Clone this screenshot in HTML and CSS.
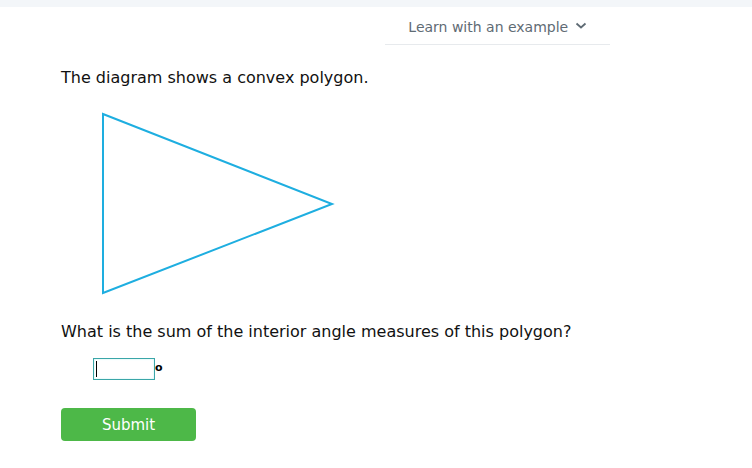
FILE: index.html
```html
<!DOCTYPE html>
<html>
<head>
<meta charset="utf-8">
<link rel="stylesheet" href="styles.css">
</head>
<body>
<div class="topbar"></div>
<div class="header">
  <div class="learn">Learn with an example <svg class="chev" width="12" height="8" viewBox="0 0 12 8"><path d="M1.5 1.5 L6 5.5 L10.5 1.5" fill="none" stroke="#5f6b74" stroke-width="1.8"/></svg></div>
</div>
<div class="content">
  <p class="text intro">The diagram shows a convex polygon.</p>
  <svg class="figure" width="236" height="186" viewBox="0 0 236 186">
    <polygon points="3,3 232,93 3,182" fill="none" stroke="#1eaee0" stroke-width="2" stroke-linejoin="miter"/>
  </svg>
  <p class="text question">What is the sum of the interior angle measures of this polygon?</p>
  <div class="answer">
    <div class="input"><span class="caret"></span></div>
    <span class="deg">o</span>
  </div>
  <button class="submit">Submit</button>
</div>
</body>
</html>
```
FILE: styles.css
```css
body {
  margin: 0;
  font-family: "DejaVu Sans", Verdana, sans-serif;
  background: #fff;
  color: #000;
}
.topbar {
  height: 7px;
  background: #f3f6f9;
}
.header {
  display: flex;
  padding-left: 385px;
  padding-top: 9px;
}
.learn {
  width: 225px;
  text-align: center;
  font-size: 14px;
  color: #5f6b74;
  height: 28px;
  line-height: 22px;
  border-bottom: 1px solid #e7eaed;
}
.chev {
  vertical-align: 2px;
  margin-left: 2px;
}
.content {
  padding-left: 61px;
}
.text {
  margin: 0;
  font-size: 16px;
  line-height: 20px;
  color: #111;
}
.intro {
  margin-top: 23px;
}
.figure {
  display: block;
  margin-left: 39px;
  margin-top: 23px;
}
.question {
  margin-top: 25px;
}
.answer {
  display: flex;
  align-items: flex-start;
  margin-top: 16px;
  margin-left: 32px;
}
.input {
  width: 60px;
  height: 20px;
  border: 1px solid #3aa6a8;
  box-shadow: inset 0 0 2px #bdeef0;
  position: relative;
}
.caret {
  position: absolute;
  left: 2px;
  top: 2px;
  width: 1px;
  height: 16px;
  background: #000;
}
.deg {
  font-size: 11px;
  font-weight: bold;
  line-height: 11px;
  margin-left: 0px;
  margin-top: 4px;
}
.submit {
  display: block;
  margin-top: 28px;
  width: 135px;
  height: 33px;
  border: none;
  border-radius: 4px;
  background: #4db848;
  color: #fff;
  font-family: "DejaVu Sans", Verdana, sans-serif;
  font-size: 15px;
  padding: 0;
}
```
